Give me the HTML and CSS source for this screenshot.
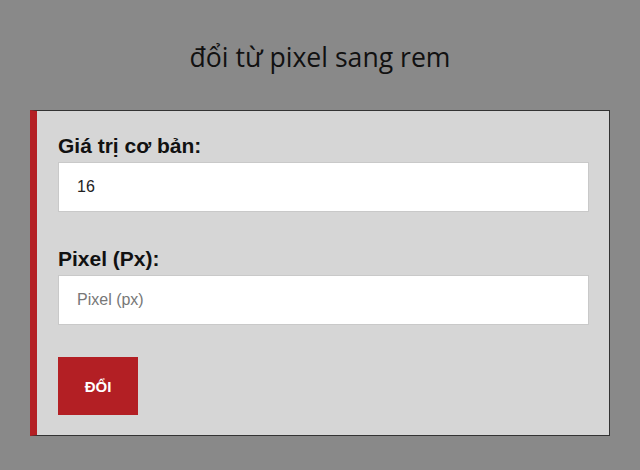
FILE: index.html
```html
<!DOCTYPE html>
<html lang="vi">
<head>
<meta charset="utf-8">
<title>đổi từ pixel sang rem</title>
<link rel="stylesheet" href="styles.css">
</head>
<body>
<header class="head">
  <h1 class="title">đổi từ pixel sang rem</h1>
</header>
<form class="card">
  <div class="group">
    <label class="label" for="base">Giá trị cơ bản:</label>
    <input class="field" id="base" type="text" value="16">
  </div>
  <div class="group">
    <label class="label" for="px">Pixel (Px):</label>
    <input class="field" id="px" type="text" placeholder="Pixel (px)">
  </div>
  <button class="btn" type="button">ĐỔI</button>
</form>
</body>
</html>
```

FILE: styles.css
```css
html, body {
  margin: 0;
  padding: 0;
}
body {
  background: #898989;
  font-family: "Liberation Sans", Arial, sans-serif;
  width: 640px;
  height: 470px;
  overflow: hidden;
}
.head {
  padding: 37px 0 33px;
  text-align: center;
}
.title {
  margin: 0;
  font-family: "Open Sans", "Noto Sans", sans-serif;
  font-weight: 400;
  font-size: 26.6px;
  line-height: 40px;
  color: #111;
}
.card {
  margin: 0 30px;
  background: #d6d6d6;
  border: 1px solid #333;
  border-left: 7px solid #b41f24;
  padding: 23px 20px 20px 21px;
}
.group {
  margin-bottom: 35px;
}
.group + .group {
  margin-bottom: 32px;
}
.label {
  display: block;
  font-size: 21px;
  font-weight: 700;
  line-height: 24px;
  color: #111;
  margin-bottom: 4px;
}
.field {
  display: block;
  box-sizing: border-box;
  width: 100%;
  height: 50px;
  margin: 0;
  padding: 0 18px;
  border: 1px solid #c9c9c9;
  background: #fff;
  font-family: "Liberation Sans", Arial, sans-serif;
  font-size: 16px;
  color: #222;
  outline: none;
}
.field::placeholder {
  color: #777;
}
.btn {
  display: block;
  width: 80px;
  height: 58px;
  margin: 0;
  padding: 0;
  border: none;
  background: #b31f24;
  color: #fff;
  font-family: "Liberation Sans", Arial, sans-serif;
  font-size: 15px;
  font-weight: 700;
}
```
